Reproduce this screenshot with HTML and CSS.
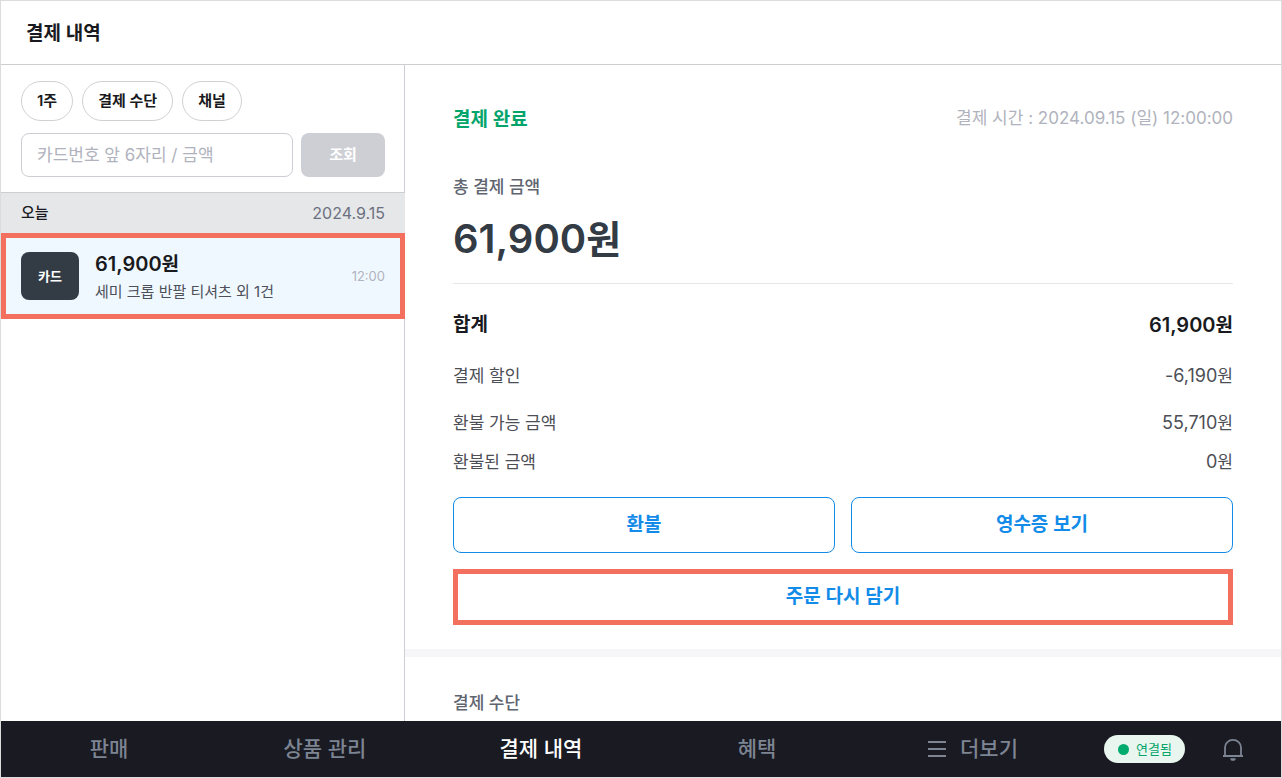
FILE: index.html
```html
<!DOCTYPE html>
<html lang="ko">
<head>
<meta charset="utf-8">
<meta name="viewport" content="width=device-width, initial-scale=1">
<title>결제 내역</title>
<link rel="stylesheet" href="styles.css">
</head>
<body>
<div class="app">
  <header class="header"><h1 class="title">결제 내역</h1></header>
  <main class="main">
    <section class="list">
      <div class="filters">
        <div class="chips">
          <button type="button" class="chip">1주</button>
          <button type="button" class="chip">결제 수단</button>
          <button type="button" class="chip">채널</button>
        </div>
        <form class="search">
          <input class="search-input" type="text" aria-label="카드번호 앞 6자리 또는 금액" placeholder="카드번호 앞 6자리 / 금액">
          <button type="button" class="search-button">조회</button>
        </form>
      </div>
      <div class="day">
        <h2 class="day-name">오늘</h2>
        <time class="day-date" datetime="2024-09-15">2024.9.15</time>
      </div>
      <button type="button" class="payment">
        <span class="badge">카드</span>
        <span class="payment-body">
          <span class="payment-amount">61,900<span class="won">원</span></span>
          <span class="payment-name">세미 크롭 반팔 티셔츠 외 1건</span>
        </span>
        <span class="payment-time">12:00</span>
      </button>
    </section>
    <section class="detail">
      <div class="receipt">
        <div class="status-row">
          <h2 class="status">결제 완료</h2>
          <p class="paid-at">결제 시간 : 2024.09.15 (일) 12:00:00</p>
        </div>
        <p class="label">총 결제 금액</p>
        <p class="total">61,900<span class="won">원</span></p>
        <dl class="rows">
          <div class="row row-sum"><dt>합계</dt><dd class="sum">61,900<span class="won">원</span></dd></div>
          <div class="row row-discount"><dt>결제 할인</dt><dd class="amount">-6,190<span class="won">원</span></dd></div>
          <div class="row row-refundable"><dt>환불 가능 금액</dt><dd class="amount">55,710<span class="won">원</span></dd></div>
          <div class="row"><dt>환불된 금액</dt><dd class="amount">0<span class="won">원</span></dd></div>
        </dl>
        <div class="actions">
          <button type="button" class="action">환불</button>
          <button type="button" class="action">영수증 보기</button>
          <button type="button" class="action action-marked">주문 다시 담기</button>
        </div>
      </div>
      <div class="method"><h2 class="label">결제 수단</h2></div>
    </section>
  </main>
  <nav class="nav">
    <a class="tab" href="#sale">판매</a>
    <a class="tab" href="#products">상품 관리</a>
    <a class="tab tab-active" href="#payments" aria-current="page">결제 내역</a>
    <a class="tab" href="#benefits">혜택</a>
    <a class="tab" href="#more">
      <svg class="menu-icon" viewBox="0 0 18 18" width="18" height="18" aria-hidden="true"><path d="M0 2h18M0 9h18M0 16h18" fill="none" stroke="currentColor" stroke-width="2"/></svg>
      더보기
    </a>
    <div class="tools">
      <span class="online">연결됨</span>
      <button type="button" class="bell" aria-label="알림">
        <svg viewBox="0 0 20 24" width="20" height="24" aria-hidden="true">
          <path d="M2 19V10.500a8 7.600 0 0 1 16 0V19" fill="none" stroke="currentColor" stroke-width="1.800"/>
          <path d="M0 19h20" stroke="currentColor" stroke-width="2"/>
          <path d="M7.300 21.200h5.400a2.700 2.600 0 0 1-5.400 0z" fill="currentColor"/>
        </svg>
      </button>
    </div>
  </nav>
</div>
</body>
</html>
```

FILE: styles.css
```css
* { box-sizing: border-box; margin: 0; }

body, button, input {
  font-family: Inter, "Noto Sans CJK KR", sans-serif;
}

body { background: #fff; color: #191a20; }

button { padding: 0; line-height: 24px; cursor: pointer; }

.app {
  display: flex;
  flex-direction: column;
  height: 100vh;
  border: 1px solid #dcdcdd;
}

.header {
  padding: 19px 25px 16px;
  border-bottom: 1px solid #cdcdcf;
}

.title { font-size: 19px; line-height: 28px; font-weight: 600; }

.main { display: flex; flex: 1; min-height: 0; }

.list {
  flex: 0 0 404px;
  min-width: 0;
  border-right: 1px solid #cdced3;
}

.filters {
  display: grid;
  grid-template-columns: minmax(0, 1fr);
  gap: 12px;
  padding: 16px 19px 15px 20px;
  border-bottom: 1px solid #cdced3;
}

.chips { display: flex; gap: 9px; }
.search { display: flex; gap: 8px; }

.chip {
  height: 40px;
  padding: 0 15px;
  border: 1px solid #d0d1d5;
  border-radius: 20px;
  background: #fff;
  color: #191a20;
  font-size: 15px;
  font-weight: 600;
}

.search-input {
  flex: 1;
  min-width: 0;
  height: 44px;
  padding: 0 15px;
  border: 1px solid #cdced3;
  border-radius: 8px;
  font-size: 17px;
  color: #191a20;
}

.search-input::placeholder { color: #b0b3bd; opacity: 1; }

.search-button {
  width: 84px;
  border: 0;
  border-radius: 8px;
  background: #cecfd5;
  color: #fff;
  font-size: 15px;
  font-weight: 600;
}

.day {
  display: flex;
  align-items: center;
  justify-content: space-between;
  height: 40px;
  margin-right: -1px;
  padding: 0 20px;
  background: #e6e7e9;
  line-height: 24px;
}

.day-name { font-size: 15px; font-weight: 500; }
.day-date { font-size: 16px; color: #6c7080; }

.payment {
  display: flex;
  align-items: center;
  width: calc(100% + 1px);
  height: 86px;
  padding: 0 15px;
  border: 5px solid #f36f5e;
  background: #f0f8ff;
  color: #191a20;
  text-align: left;
}

.badge {
  width: 58px;
  margin-right: 16px;
  border-radius: 8px;
  background: #333b45;
  color: #fff;
  font-size: 13px;
  line-height: 48px;
  font-weight: 600;
  text-align: center;
}

.payment-body { display: grid; flex: 1; padding-top: 2px; }
.payment-amount { font-size: 20px; line-height: 28px; font-weight: 600; }
.payment-name { font-size: 15px; line-height: 26px; color: #4d5059; }
.payment-time { font-size: 13px; color: #b0b3bd; }

.won { font-size: 0.95em; }

.detail { flex: 1; min-width: 0; overflow: hidden; }

.receipt {
  padding: 41px 48px 24px;
  border-bottom: 8px solid #f6f6f8;
}

.status-row {
  display: flex;
  justify-content: space-between;
  margin-bottom: 41px;
}

.status { font-size: 19px; line-height: 28px; font-weight: 600; color: #03a56b; }
.paid-at { font-size: 17px; line-height: 24px; color: #b0b3bd; }
.label { font-size: 17px; line-height: 24px; font-weight: 500; color: #60646f; }

.total {
  margin-top: 12px;
  padding-bottom: 16px;
  border-bottom: 1px solid #e6e7e9;
  color: #333b45;
  font-size: 40px;
  line-height: 56px;
  font-weight: 600;
}

.rows { padding: 27px 0 23px; }

.row {
  display: flex;
  justify-content: space-between;
  color: #4d4f56;
  font-size: 17px;
  line-height: 24px;
}

.amount { font-size: 18px; }

.row-sum {
  margin-bottom: 24px;
  color: #191a20;
  font-size: 19px;
  line-height: 28px;
  font-weight: 600;
}

.sum { font-size: 20px; }

.row-discount { margin-bottom: 23px; }
.row-refundable { margin-bottom: 15px; }

.actions {
  display: grid;
  grid-template-columns: 1fr 1fr;
  gap: 16px;
}

.action {
  height: 56px;
  border: 1px solid #138be8;
  border-radius: 8px;
  background: #fff;
  color: #138be8;
  font-size: 19px;
  font-weight: 600;
}

.action-marked {
  grid-column: 1 / -1;
  border: 5px solid #f36f5e;
  border-radius: 0;
}

.method { padding: 34px 48px; }

.nav {
  display: flex;
  height: 56px;
  background: #191a22;
}

.tab {
  display: flex;
  flex: 1;
  align-items: center;
  justify-content: center;
  gap: 14px;
  color: #7d8492;
  font-size: 21px;
  line-height: 28px;
  font-weight: 500;
  text-decoration: none;
}

.tab-active { color: #fff; }

.tools {
  display: flex;
  align-items: center;
  justify-content: space-between;
  flex: 0 0 200px;
  padding: 0 38px 0 23px;
}

.online {
  display: flex;
  align-items: center;
  gap: 7px;
  padding: 0 13px 0 14px;
  border-radius: 14px;
  background: #e9f6ef;
  color: #03a56b;
  font-size: 13px;
  line-height: 28px;
}

.online::before {
  content: "";
  width: 11px;
  height: 11px;
  border-radius: 50%;
  background: #03ab6e;
}

.bell {
  display: flex;
  border: 0;
  background: none;
  color: #7d8492;
}
```
